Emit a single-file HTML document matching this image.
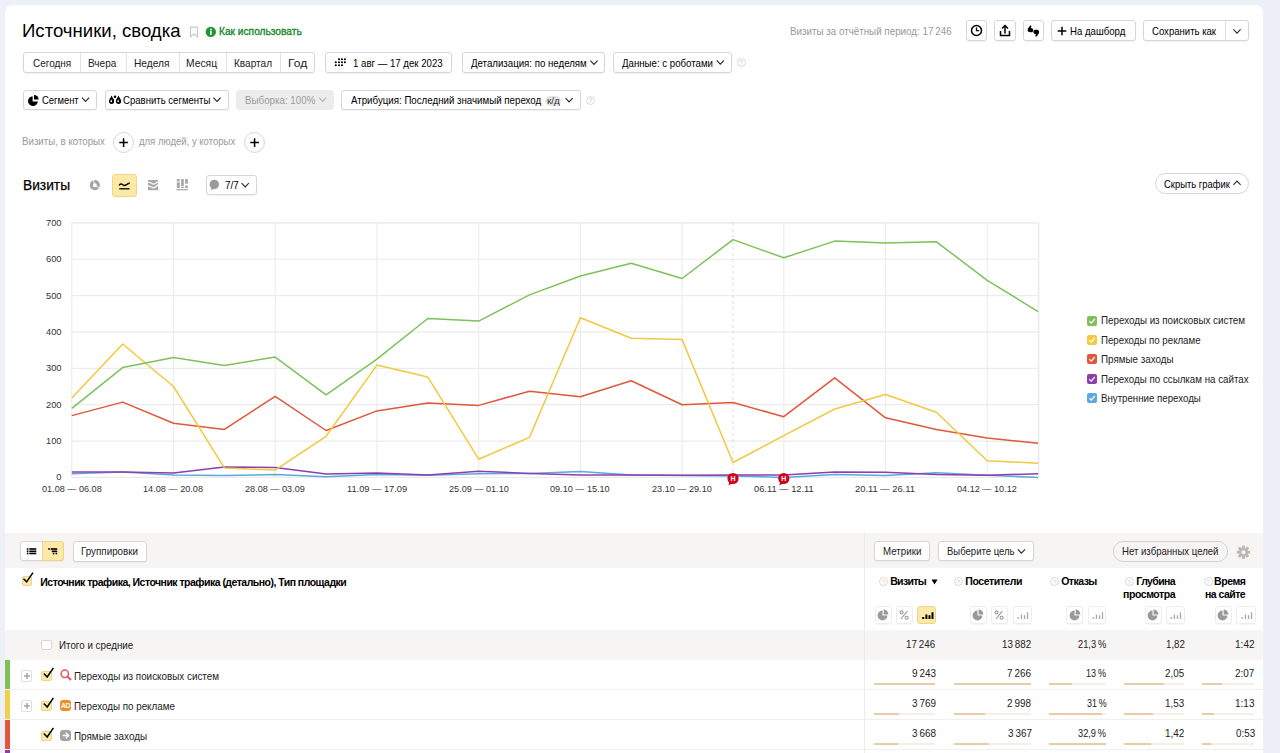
<!DOCTYPE html>
<html><head><meta charset="utf-8"><style>
*{box-sizing:border-box;margin:0;padding:0}
html,body{width:1280px;height:753px;overflow:hidden;background:#edf0f6;font-family:"Liberation Sans",sans-serif;color:#000}
#card{position:absolute;left:5px;top:5px;width:1258px;height:760px;background:#fff;border-radius:8px 8px 0 0}
.a{position:absolute;white-space:nowrap}
.b{position:absolute;border:1px solid #d6d6d6;border-radius:3px;background:#fff;box-shadow:0 1px 1px rgba(0,0,0,.05)}
.p{position:absolute;background:#fff}
</style></head><body>
<div id="card"></div>
<div class="a" style="left:22.31px;top:20.09px;font-size:18.5px;line-height:22px;color:#000;transform:scaleX(1.0037);transform-origin:0 0;">Источники, сводка</div>
<svg class="a" style="left:189px;top:26px" width="10" height="12" viewBox="0 0 10 12"><path d="M1.5 1.2h7v9.6l-3.5-2.8-3.5 2.8z" fill="none" stroke="#c9c9c9" stroke-width="1.2"/></svg>
<svg class="a" style="left:205px;top:26px" width="12" height="12" viewBox="0 0 12 12"><circle cx="5.8" cy="5.9" r="5.2" fill="#1f9636"/><rect x="5" y="5" width="1.7" height="3.8" fill="#fff"/><circle cx="5.85" cy="3.4" r="1" fill="#fff"/></svg>
<div class="a" style="left:219.19px;top:25.60px;font-size:10.3px;line-height:12px;color:#198a2c;transform:scaleX(0.9878);transform-origin:0 0;-webkit-text-stroke:0.35px #198a2c;">Как использовать</div>
<div class="a" style="left:789.72px;top:25.03px;font-size:10.5px;line-height:13px;color:#999;transform:scaleX(0.9338);transform-origin:0 0;">Визиты за отчётный период: 17 246</div>
<div class="b" style="left:966px;top:20px;width:21px;height:21px;"></div>
<svg class="a" style="left:966px;top:20px" width="21" height="21" viewBox="0 0 21 21"><circle cx="10.5" cy="10.5" r="5" fill="none" stroke="#000" stroke-width="1.5"/><path d="M10.5 7.5v3.2h2.6" fill="none" stroke="#000" stroke-width="1.3"/></svg>
<div class="b" style="left:994px;top:20px;width:22px;height:21px;"></div>
<svg class="a" style="left:994px;top:20px" width="22" height="21" viewBox="0 0 22 21"><path d="M11 5.5v8" stroke="#000" stroke-width="1.5"/><path d="M8 8.5l3-3 3 3" fill="none" stroke="#000" stroke-width="1.5"/><path d="M6.5 11v4.5h9V11" fill="none" stroke="#000" stroke-width="1.5"/></svg>
<div class="b" style="left:1023px;top:20px;width:21px;height:21px;"></div>
<svg class="a" style="left:1023px;top:20px" width="21" height="21" viewBox="0 0 21 21"><path d="M4.6 10.6 C4.4 8.8 5.6 7.2 7.6 5.3 L8.6 6.2 C8 7 7.7 7.6 7.8 8 C9.4 8.1 10.4 9.1 10.3 10.4 C10.2 11.7 9.1 12.3 7.6 12.3 C5.8 12.3 4.8 11.7 4.6 10.6Z" fill="#000"/><g transform="rotate(180 10.35 11.05)"><path d="M4.6 10.6 C4.4 8.8 5.6 7.2 7.6 5.3 L8.6 6.2 C8 7 7.7 7.6 7.8 8 C9.4 8.1 10.4 9.1 10.3 10.4 C10.2 11.7 9.1 12.3 7.6 12.3 C5.8 12.3 4.8 11.7 4.6 10.6Z" fill="#000"/></g></svg>
<div class="b" style="left:1051px;top:20px;width:85px;height:21px;"></div>
<svg class="a" style="left:1054.5px;top:24px" width="14" height="14" viewBox="0 0 14 14"><path d="M7 2.7v8.6M2.7 7h8.6" stroke="#000" stroke-width="1.5"/></svg>
<div class="a" style="left:1069.83px;top:25.03px;font-size:10.5px;line-height:13px;color:#000;transform:scaleX(0.9178);transform-origin:0 0;">На дашборд</div>
<div class="b" style="left:1143px;top:20px;width:106px;height:21px;"></div>
<div class="a" style="left:1225px;top:21px;width:1px;height:19px;background:#e0e0e0"></div>
<div class="a" style="left:1152.02px;top:25.03px;font-size:10.5px;line-height:13px;color:#000;transform:scaleX(0.9102);transform-origin:0 0;">Сохранить как</div>
<svg class="a" style="left:0;top:0;overflow:visible" width="1" height="1"><path d="M1233.40 29.45 L1237.00 33.15 L1240.60 29.45" fill="none" stroke="#000" stroke-width="1.1" stroke-opacity="0.85"/></svg>
<div class="b" style="left:23px;top:52px;width:292px;height:21px;"></div>
<div class="a" style="left:79.5px;top:53px;width:1px;height:19px;background:#e2e2e2"></div>
<div class="a" style="left:125.5px;top:53px;width:1px;height:19px;background:#e2e2e2"></div>
<div class="a" style="left:178.5px;top:53px;width:1px;height:19px;background:#e2e2e2"></div>
<div class="a" style="left:226px;top:53px;width:1px;height:19px;background:#e2e2e2"></div>
<div class="a" style="left:280px;top:53px;width:1px;height:19px;background:#e2e2e2"></div>
<div class="a" style="left:32.50px;top:56.53px;font-size:10.5px;line-height:13px;color:#222;transform:scaleX(0.9485);transform-origin:0 0;">Сегодня</div>
<div class="a" style="left:87.95px;top:56.53px;font-size:10.5px;line-height:13px;color:#222;transform:scaleX(0.9559);transform-origin:0 0;">Вчера</div>
<div class="a" style="left:134.19px;top:56.53px;font-size:10.5px;line-height:13px;color:#222;transform:scaleX(0.9695);transform-origin:0 0;">Неделя</div>
<div class="a" style="left:186.48px;top:56.53px;font-size:10.5px;line-height:13px;color:#222;transform:scaleX(0.9818);transform-origin:0 0;">Месяц</div>
<div class="a" style="left:233.95px;top:56.53px;font-size:10.5px;line-height:13px;color:#222;transform:scaleX(0.9576);transform-origin:0 0;">Квартал</div>
<div class="a" style="left:287.54px;top:56.53px;font-size:10.5px;line-height:13px;color:#222;transform:scaleX(1.1467);transform-origin:0 0;">Год</div>
<div class="b" style="left:325px;top:52px;width:127px;height:21px;"></div>
<svg class="a" style="left:326px;top:52px" width="30" height="22" viewBox="0 0 30 22"><circle cx="13" cy="7.2" r="1.05" fill="#000"/><circle cx="16" cy="7.2" r="1.05" fill="#000"/><circle cx="18.9" cy="7.2" r="1.05" fill="#000"/><circle cx="9.8" cy="10.2" r="1.05" fill="#000"/><circle cx="13" cy="10.2" r="1.05" fill="#000"/><circle cx="16" cy="10.2" r="1.05" fill="#000"/><circle cx="18.9" cy="10.2" r="1.05" fill="#000"/><circle cx="9.8" cy="13.3" r="1.05" fill="#000"/><circle cx="13" cy="13.3" r="1.05" fill="#000"/><circle cx="16" cy="13.3" r="1.05" fill="#000"/></svg>
<div class="a" style="left:353.28px;top:56.53px;font-size:10.5px;line-height:13px;color:#000;transform:scaleX(0.9166);transform-origin:0 0;">1 авг — 17 дек 2023</div>
<div class="b" style="left:462px;top:52px;width:143px;height:21px;"></div>
<div class="a" style="left:471.25px;top:56.53px;font-size:10.5px;line-height:13px;color:#000;transform:scaleX(0.9208);transform-origin:0 0;">Детализация: по неделям</div>
<svg class="a" style="left:0;top:0;overflow:visible" width="1" height="1"><path d="M590.40 60.65 L594.00 64.35 L597.60 60.65" fill="none" stroke="#000" stroke-width="1.1" stroke-opacity="0.85"/></svg>
<div class="b" style="left:613px;top:52px;width:119px;height:21px;"></div>
<div class="a" style="left:621.95px;top:56.53px;font-size:10.5px;line-height:13px;color:#000;transform:scaleX(0.9208);transform-origin:0 0;">Данные: с роботами</div>
<svg class="a" style="left:0;top:0;overflow:visible" width="1" height="1"><path d="M716.70 60.45 L720.30 64.15 L723.90 60.45" fill="none" stroke="#000" stroke-width="1.1" stroke-opacity="0.85"/></svg>
<div class="a" style="left:736.8px;top:58.4px;width:9px;height:9px;border:1px solid #d8d8d8;border-radius:50%;font-size:7px;line-height:8px;text-align:center;color:#c0c0c0">?</div>
<div class="b" style="left:23px;top:90px;width:74px;height:20px;"></div>
<svg class="a" style="left:26px;top:94px" width="14" height="14" viewBox="0 0 14 14"><path d="M6.6 2.2 A4.9 4.9 0 1 0 11.8 7.4 L6.6 7.4 Z" fill="#000"/><path d="M8 1 A4.6 4.6 0 0 1 12.6 5.6 L8 5.6 Z" fill="#000"/></svg>
<div class="a" style="left:41.53px;top:94.03px;font-size:10.5px;line-height:13px;color:#000;transform:scaleX(0.8952);transform-origin:0 0;">Сегмент</div>
<svg class="a" style="left:0;top:0;overflow:visible" width="1" height="1"><path d="M81.90 97.65 L85.50 101.35 L89.10 97.65" fill="none" stroke="#000" stroke-width="1.1" stroke-opacity="0.85"/></svg>
<div class="b" style="left:104.5px;top:90px;width:124.0px;height:20px;"></div>
<svg class="a" style="left:106px;top:93px" width="16" height="14" viewBox="0 0 16 14"><path d="M5.6 2.6 C4.6 5 2.9999999999999996 6.4 2.9999999999999996 8.3 A2.6 2.6 0 0 0 8.2 8.3 C8.2 6.4 6.6 5 5.6 2.6Z" fill="#000"/><path d="M5.3 6.2 C4.8 7.2 4.3999999999999995 7.8 4.3999999999999995 8.6 A1 1 0 0 0 6.199999999999999 8.8Z" fill="#fff"/><path d="M12.5 2.6 C11.5 5 9.9 6.4 9.9 8.3 A2.6 2.6 0 0 0 15.1 8.3 C15.1 6.4 13.5 5 12.5 2.6Z" fill="#000"/><path d="M12.2 6.2 C11.7 7.2 11.3 7.8 11.3 8.6 A1 1 0 0 0 13.1 8.8Z" fill="#fff"/><circle cx="9" cy="3.7" r="1.3" fill="#000"/></svg>
<div class="a" style="left:122.82px;top:94.03px;font-size:10.5px;line-height:13px;color:#000;transform:scaleX(0.9112);transform-origin:0 0;">Сравнить сегменты</div>
<svg class="a" style="left:0;top:0;overflow:visible" width="1" height="1"><path d="M213.40 97.65 L217.00 101.35 L220.60 97.65" fill="none" stroke="#000" stroke-width="1.1" stroke-opacity="0.85"/></svg>
<div class="b" style="left:236px;top:90px;width:98px;height:20px;background:#ececec;border-color:#ececec;box-shadow:none"></div>
<div class="a" style="left:244.62px;top:94.03px;font-size:10.5px;line-height:13px;color:#9c9c9c;transform:scaleX(0.9302);transform-origin:0 0;">Выборка: 100%</div>
<svg class="a" style="left:0;top:0;overflow:visible" width="1" height="1"><path d="M319.10 97.65 L322.70 101.35 L326.30 97.65" fill="none" stroke="#aaa" stroke-width="1.1" stroke-opacity="0.85"/></svg>
<div class="b" style="left:341px;top:90px;width:240px;height:20px;"></div>
<div class="a" style="left:351.00px;top:94.03px;font-size:10.5px;line-height:13px;color:#000;transform:scaleX(0.9249);transform-origin:0 0;">Атрибуция: Последний значимый переход</div>
<div class="a" style="left:544.7px;top:96px;width:16.5px;height:10px;border-radius:5px;background:#e4e4e4"></div>
<div class="a" style="left:546.56px;top:95.73px;font-size:9px;line-height:11px;color:#333;transform:scaleX(1.0974);transform-origin:0 0;">к/д</div>
<svg class="a" style="left:0;top:0;overflow:visible" width="1" height="1"><path d="M565.50 98.15 L569.10 101.85 L572.70 98.15" fill="none" stroke="#000" stroke-width="1.1" stroke-opacity="0.85"/></svg>
<div class="a" style="left:585.7px;top:96.3px;width:9px;height:9px;border:1px solid #d8d8d8;border-radius:50%;font-size:7px;line-height:8px;text-align:center;color:#c0c0c0">?</div>
<div class="a" style="left:22.22px;top:135.33px;font-size:10.5px;line-height:13px;color:#999;transform:scaleX(0.9237);transform-origin:0 0;">Визиты, в которых</div>
<div class="a" style="left:113px;top:132px;width:21px;height:21px;border:1px solid #d6d6d6;border-radius:50%;background:#fff"></div>
<svg class="a" style="left:117px;top:136px" width="13" height="13" viewBox="0 0 13 13"><path d="M6.6 2.3v8.6M2.3 6.6h8.6" stroke="#000" stroke-width="1.5"/></svg>
<div class="a" style="left:139.40px;top:135.33px;font-size:10.5px;line-height:13px;color:#999;transform:scaleX(0.9079);transform-origin:0 0;">для людей, у которых</div>
<div class="a" style="left:243.5px;top:132px;width:21px;height:21px;border:1px solid #d6d6d6;border-radius:50%;background:#fff"></div>
<svg class="a" style="left:247.5px;top:136px" width="13" height="13" viewBox="0 0 13 13"><path d="M6.6 2.3v8.6M2.3 6.6h8.6" stroke="#000" stroke-width="1.5"/></svg>
<div class="a" style="left:23.10px;top:176.57px;font-size:14.3px;line-height:17px;color:#000;transform:scaleX(0.9623);transform-origin:0 0;-webkit-text-stroke:0.25px #000;">Визиты</div>
<svg class="a" style="left:87px;top:177px" width="16" height="16" viewBox="0 0 16 16"><circle cx="7.85" cy="8.2" r="3.55" fill="none" stroke="#a3a3a3" stroke-width="3.1"/><path d="M7.85 8.2 L6.2 2.8 M7.85 8.2 L13 11.1" stroke="#fff" stroke-width="0.9"/></svg>
<div class="b" style="left:111.5px;top:173.5px;width:25.0px;height:23.0px;background:#fce9a5;border-color:#f0d68a;box-shadow:none"></div>
<svg class="a" style="left:111.5px;top:173.5px" width="25" height="23" viewBox="0 0 25 23"><path d="M7.4 10.9 C8.6 9.5 10 9.9 11.2 11.1 C12.2 12 13 11.7 14.5 10.7 L17.2 9.1" fill="none" stroke="#000" stroke-width="1.4" stroke-linecap="round"/><path d="M7.3 14.8h10.2" stroke="#000" stroke-width="1.3"/></svg>
<svg class="a" style="left:147px;top:179px" width="13" height="13" viewBox="0 0 13 13"><rect x="1.05" y="0.95" width="10.05" height="10.25" fill="#a8a8a8"/><path d="M0.5 3.2 Q3.6 3.4 6.5 5.3 Q8.8 4.6 11.6 1.8 M0.5 6.9 Q3.6 7.1 6.5 9 Q8.8 8.3 11.6 5.5" fill="none" stroke="#fff" stroke-width="1.2"/></svg>
<svg class="a" style="left:175px;top:178px" width="14" height="14" viewBox="0 0 14 14"><g fill="#a8a8a8"><rect x="1.8" y="1" width="3" height="2.4"/><rect x="1.8" y="4.3" width="3" height="5.7"/><rect x="6.1" y="1" width="2.7" height="7.4"/><rect x="6.1" y="9" width="2.7" height="1"/><rect x="10.1" y="1" width="2.8" height="4.7"/><rect x="10.1" y="7.5" width="2.8" height="2.5"/><rect x="1.3" y="11.1" width="11.7" height="1.2"/></g></svg>
<div class="b" style="left:206px;top:175px;width:51px;height:20px;"></div>
<svg class="a" style="left:207px;top:178px" width="14" height="14" viewBox="0 0 14 14"><circle cx="7.3" cy="6.4" r="4.7" fill="#9a9a9a"/><path d="M4.6 9.5 L4 12.6 L7.6 10.6z" fill="#9a9a9a"/></svg>
<div class="a" style="left:224.81px;top:179.03px;font-size:10.5px;line-height:13px;color:#000;transform:scaleX(0.9376);transform-origin:0 0;">7/7</div>
<svg class="a" style="left:0;top:0;overflow:visible" width="1" height="1"><path d="M241.60 183.15 L245.20 186.85 L248.80 183.15" fill="none" stroke="#000" stroke-width="1.1" stroke-opacity="0.85"/></svg>
<div class="a" style="left:1154.5px;top:173px;width:94px;height:21px;border:1px solid #d6d6d6;border-radius:11px;background:#fff"></div>
<div class="a" style="left:1163.93px;top:177.53px;font-size:10.5px;line-height:13px;color:#000;transform:scaleX(0.8989);transform-origin:0 0;">Скрыть график</div>
<svg class="a" style="left:0;top:0;overflow:visible" width="1" height="1"><path d="M1233.40 184.85 L1237.00 181.15 L1240.60 184.85" fill="none" stroke="#000" stroke-width="1.1" stroke-opacity="0.85"/></svg>
<svg class="a" style="left:0;top:0" width="1280" height="753"><path d="M71.8 477.40H1038.1" stroke="#ebebeb" stroke-width="1.2"/><path d="M71.8 441.04H1038.1" stroke="#ebebeb" stroke-width="1.2"/><path d="M71.8 404.69H1038.1" stroke="#ebebeb" stroke-width="1.2"/><path d="M71.8 368.33H1038.1" stroke="#ebebeb" stroke-width="1.2"/><path d="M71.8 331.97H1038.1" stroke="#ebebeb" stroke-width="1.2"/><path d="M71.8 295.62H1038.1" stroke="#ebebeb" stroke-width="1.2"/><path d="M71.8 259.26H1038.1" stroke="#ebebeb" stroke-width="1.2"/><path d="M71.8 222.90H1038.1" stroke="#ebebeb" stroke-width="1.2"/><path d="M71.8 222.60H1038.1" stroke="#ebebeb" stroke-width="1.2"/><path d="M71.80 222.90V477.40" stroke="#ededed" stroke-width="1.2"/><path d="M173.52 222.90V477.40" stroke="#ededed" stroke-width="1.2"/><path d="M275.23 222.90V477.40" stroke="#ededed" stroke-width="1.2"/><path d="M376.95 222.90V477.40" stroke="#ededed" stroke-width="1.2"/><path d="M478.66 222.90V477.40" stroke="#ededed" stroke-width="1.2"/><path d="M580.38 222.90V477.40" stroke="#ededed" stroke-width="1.2"/><path d="M682.09 222.90V477.40" stroke="#ededed" stroke-width="1.2"/><path d="M783.81 222.90V477.40" stroke="#ededed" stroke-width="1.2"/><path d="M885.53 222.90V477.40" stroke="#ededed" stroke-width="1.2"/><path d="M987.24 222.90V477.40" stroke="#ededed" stroke-width="1.2"/><path d="M1038.60 222.90V477.40" stroke="#ebebeb" stroke-width="1.6"/><path d="M732.9526315789473 222.90099999999998V477.4" stroke="#dcdcdc" stroke-width="1" stroke-dasharray="3 3"/><path d="M71.8 473.8 L122.7 471.9 L173.5 474.9 L224.4 475.6 L275.2 474.5 L326.1 476.7 L376.9 474.5 L427.8 475.2 L478.7 473.8 L529.5 473.4 L580.4 471.6 L631.2 474.9 L682.1 475.6 L733.0 475.9 L783.8 477.4 L834.7 474.5 L885.5 475.6 L936.4 472.7 L987.2 475.2 L1038.1 477.4" fill="none" stroke="#5ca8e0" stroke-width="1.5" stroke-linejoin="round"/><path d="M71.8 471.9 L122.7 471.9 L173.5 473.0 L224.4 466.9 L275.2 467.6 L326.1 474.1 L376.9 473.0 L427.8 474.9 L478.7 471.2 L529.5 473.4 L580.4 474.9 L631.2 474.9 L682.1 475.2 L733.0 474.9 L783.8 474.9 L834.7 471.9 L885.5 472.3 L936.4 474.5 L987.2 475.2 L1038.1 473.8" fill="none" stroke="#8e3fae" stroke-width="1.5" stroke-linejoin="round"/><path d="M71.8 415.6 L122.7 402.1 L173.5 423.2 L224.4 429.4 L275.2 396.3 L326.1 430.5 L376.9 410.9 L427.8 402.9 L478.7 405.4 L529.5 391.2 L580.4 396.7 L631.2 380.7 L682.1 404.7 L733.0 402.5 L783.8 416.7 L834.7 377.8 L885.5 417.8 L936.4 429.4 L987.2 438.1 L1038.1 443.2" fill="none" stroke="#e0573a" stroke-width="1.5" stroke-linejoin="round"/><path d="M71.8 398.1 L122.7 344.0 L173.5 386.5 L224.4 467.9 L275.2 470.1 L326.1 436.3 L376.9 365.1 L427.8 377.1 L478.7 459.2 L529.5 437.4 L580.4 317.8 L631.2 338.2 L682.1 339.6 L733.0 462.5 L783.8 435.6 L834.7 409.0 L885.5 394.5 L936.4 412.3 L987.2 460.7 L1038.1 463.2" fill="none" stroke="#f2c840" stroke-width="1.5" stroke-linejoin="round"/><path d="M71.8 408.3 L122.7 367.6 L173.5 357.4 L224.4 365.4 L275.2 357.1 L326.1 394.9 L376.9 359.2 L427.8 318.5 L478.7 321.1 L529.5 294.9 L580.4 276.0 L631.2 263.3 L682.1 278.5 L733.0 239.6 L783.8 257.8 L834.7 241.1 L885.5 242.9 L936.4 241.8 L987.2 280.3 L1038.1 311.6" fill="none" stroke="#7ec15a" stroke-width="1.5" stroke-linejoin="round"/><path d="M729.5 481.5 L728.5 485.5 L733.0 483.0Z" fill="#d0021b"/><circle cx="733.0" cy="478.5" r="5.6" fill="#d0021b"/><text x="733.0" y="481.1" font-family="Liberation Sans" font-size="7" font-weight="700" fill="#fff" text-anchor="middle">Н</text><path d="M780.3 481.5 L779.3 485.5 L783.8 483.0Z" fill="#d0021b"/><circle cx="783.8" cy="478.5" r="5.6" fill="#d0021b"/><text x="783.8" y="481.1" font-family="Liberation Sans" font-size="7" font-weight="700" fill="#fff" text-anchor="middle">Н</text></svg>
<div class="a" style="left:56.36px;top:472.33px;font-size:9.3px;line-height:11px;color:#333;">0</div>
<div class="a" style="left:46.04px;top:435.97px;font-size:9.3px;line-height:11px;color:#333;">100</div>
<div class="a" style="left:46.04px;top:399.61px;font-size:9.3px;line-height:11px;color:#333;">200</div>
<div class="a" style="left:46.04px;top:363.26px;font-size:9.3px;line-height:11px;color:#333;">300</div>
<div class="a" style="left:46.04px;top:326.90px;font-size:9.3px;line-height:11px;color:#333;">400</div>
<div class="a" style="left:46.04px;top:290.54px;font-size:9.3px;line-height:11px;color:#333;">500</div>
<div class="a" style="left:46.04px;top:254.18px;font-size:9.3px;line-height:11px;color:#333;">600</div>
<div class="a" style="left:46.04px;top:217.83px;font-size:9.3px;line-height:11px;color:#333;">700</div>
<div class="a" style="left:41.84px;top:483.93px;font-size:9.3px;line-height:11px;color:#333;transform:scaleX(0.9790);transform-origin:0 0;">01.08 — 06.08</div>
<div class="a" style="left:143.23px;top:483.93px;font-size:9.3px;line-height:11px;color:#333;transform:scaleX(0.9843);transform-origin:0 0;">14.08 — 20.08</div>
<div class="a" style="left:245.18px;top:483.93px;font-size:9.3px;line-height:11px;color:#333;transform:scaleX(0.9813);transform-origin:0 0;">28.08 — 03.09</div>
<div class="a" style="left:346.65px;top:483.93px;font-size:9.3px;line-height:11px;color:#333;transform:scaleX(0.9967);transform-origin:0 0;">11.09 — 17.09</div>
<div class="a" style="left:448.61px;top:483.93px;font-size:9.3px;line-height:11px;color:#333;transform:scaleX(0.9798);transform-origin:0 0;">25.09 — 01.10</div>
<div class="a" style="left:550.42px;top:483.93px;font-size:9.3px;line-height:11px;color:#333;transform:scaleX(0.9783);transform-origin:0 0;">09.10 — 15.10</div>
<div class="a" style="left:652.04px;top:483.93px;font-size:9.3px;line-height:11px;color:#333;transform:scaleX(0.9798);transform-origin:0 0;">23.10 — 29.10</div>
<div class="a" style="left:753.84px;top:483.93px;font-size:9.3px;line-height:11px;color:#333;transform:scaleX(1.0030);transform-origin:0 0;">06.11 — 12.11</div>
<div class="a" style="left:855.46px;top:483.93px;font-size:9.3px;line-height:11px;color:#333;transform:scaleX(1.0046);transform-origin:0 0;">20.11 — 26.11</div>
<div class="a" style="left:957.28px;top:483.93px;font-size:9.3px;line-height:11px;color:#333;transform:scaleX(0.9805);transform-origin:0 0;">04.12 — 10.12</div>
<div class="a" style="left:1087px;top:315.5px;width:10px;height:10px;border-radius:2px;background:#7ec15a"></div>
<svg class="a" style="left:1087px;top:316px" width="10" height="10" viewBox="0 0 10 10"><path d="M2.3 5.2 L4.2 7.2 L7.8 3" fill="none" stroke="#fff" stroke-width="1.2"/></svg>
<div class="a" style="left:1101.02px;top:314.33px;font-size:10.5px;line-height:13px;color:#222;transform:scaleX(0.9324);transform-origin:0 0;">Переходы из поисковых систем</div>
<div class="a" style="left:1087px;top:334.9px;width:10px;height:10px;border-radius:2px;background:#f5c842"></div>
<svg class="a" style="left:1087px;top:335px" width="10" height="10" viewBox="0 0 10 10"><path d="M2.3 5.2 L4.2 7.2 L7.8 3" fill="none" stroke="#fff" stroke-width="1.2"/></svg>
<div class="a" style="left:1101.03px;top:333.73px;font-size:10.5px;line-height:13px;color:#222;transform:scaleX(0.9214);transform-origin:0 0;">Переходы по рекламе</div>
<div class="a" style="left:1087px;top:354.3px;width:10px;height:10px;border-radius:2px;background:#e0573a"></div>
<svg class="a" style="left:1087px;top:354px" width="10" height="10" viewBox="0 0 10 10"><path d="M2.3 5.2 L4.2 7.2 L7.8 3" fill="none" stroke="#fff" stroke-width="1.2"/></svg>
<div class="a" style="left:1101.01px;top:353.13px;font-size:10.5px;line-height:13px;color:#222;transform:scaleX(0.9359);transform-origin:0 0;">Прямые заходы</div>
<div class="a" style="left:1087px;top:373.7px;width:10px;height:10px;border-radius:2px;background:#8e3fae"></div>
<svg class="a" style="left:1087px;top:374px" width="10" height="10" viewBox="0 0 10 10"><path d="M2.3 5.2 L4.2 7.2 L7.8 3" fill="none" stroke="#fff" stroke-width="1.2"/></svg>
<div class="a" style="left:1101.02px;top:372.53px;font-size:10.5px;line-height:13px;color:#222;transform:scaleX(0.9290);transform-origin:0 0;">Переходы по ссылкам на сайтах</div>
<div class="a" style="left:1087px;top:393.1px;width:10px;height:10px;border-radius:2px;background:#5ca8e0"></div>
<svg class="a" style="left:1087px;top:393px" width="10" height="10" viewBox="0 0 10 10"><path d="M2.3 5.2 L4.2 7.2 L7.8 3" fill="none" stroke="#fff" stroke-width="1.2"/></svg>
<div class="a" style="left:1101.03px;top:391.93px;font-size:10.5px;line-height:13px;color:#222;transform:scaleX(0.9224);transform-origin:0 0;">Внутренние переходы</div>
<div class="a" style="left:5px;top:533px;width:1258px;height:35px;background:#f6f5f3"></div>
<div class="a" style="left:864px;top:533px;width:1px;height:230px;background:#ebebeb"></div>
<div class="b" style="left:20px;top:541px;width:44px;height:20px;"></div>
<div class="a" style="left:42px;top:541px;width:22px;height:20px;background:#fce9a5;border:1px solid #ead58f;border-radius:0 3px 3px 0"></div>
<svg class="a" style="left:20px;top:541px" width="44" height="20" viewBox="0 0 44 20"><g fill="#000"><rect x="6.8" y="7.2" width="1.6" height="1.6"/><rect x="6.8" y="9.5" width="1.6" height="1.6"/><rect x="6.8" y="11.7" width="1.6" height="1.6"/><rect x="9.3" y="7.2" width="7" height="1.6"/><rect x="9.3" y="9.5" width="7" height="1.6"/><rect x="9.3" y="11.7" width="7" height="1.6"/><rect x="28.2" y="7.2" width="1.6" height="1.6"/><rect x="30.6" y="7.2" width="6.6" height="1.6"/><rect x="31.8" y="9.5" width="5.4" height="1.6"/><rect x="32.8" y="11.7" width="1.6" height="1.6"/><rect x="35.6" y="11.7" width="1.6" height="1.6"/></g></svg>
<div class="b" style="left:72.5px;top:541px;width:74.0px;height:20.5px;"></div>
<div class="a" style="left:80.81px;top:545.03px;font-size:10.5px;line-height:13px;color:#222;transform:scaleX(0.9347);transform-origin:0 0;">Группировки</div>
<div class="b" style="left:873.5px;top:541px;width:56.5px;height:20px;"></div>
<div class="a" style="left:882.52px;top:545.33px;font-size:10.5px;line-height:13px;color:#222;transform:scaleX(0.9273);transform-origin:0 0;">Метрики</div>
<div class="b" style="left:938px;top:541px;width:95.5px;height:20px;"></div>
<div class="a" style="left:946.94px;top:545.33px;font-size:10.5px;line-height:13px;color:#222;transform:scaleX(0.9079);transform-origin:0 0;">Выберите цель</div>
<svg class="a" style="left:0;top:0;overflow:visible" width="1" height="1"><path d="M1017.80 549.45 L1021.40 553.15 L1025.00 549.45" fill="none" stroke="#000" stroke-width="1.1" stroke-opacity="0.85"/></svg>
<div class="a" style="left:1112.5px;top:541.4px;width:115px;height:20.3px;border:1px solid #d2d2d2;border-radius:10px;background:transparent"></div>
<div class="a" style="left:1121.83px;top:545.13px;font-size:10.5px;line-height:13px;color:#222;transform:scaleX(0.9134);transform-origin:0 0;">Нет избранных целей</div>
<svg class="a" style="left:1236px;top:544.5px" width="15" height="15" viewBox="0 0 15 15"><g transform="translate(7.5 7.2)"><circle r="4.6" fill="#b8b8b8"/><rect x="-1.4" y="-6.6" width="2.8" height="3" fill="#b8b8b8" transform="rotate(0)"/><rect x="-1.4" y="-6.6" width="2.8" height="3" fill="#b8b8b8" transform="rotate(45)"/><rect x="-1.4" y="-6.6" width="2.8" height="3" fill="#b8b8b8" transform="rotate(90)"/><rect x="-1.4" y="-6.6" width="2.8" height="3" fill="#b8b8b8" transform="rotate(135)"/><rect x="-1.4" y="-6.6" width="2.8" height="3" fill="#b8b8b8" transform="rotate(180)"/><rect x="-1.4" y="-6.6" width="2.8" height="3" fill="#b8b8b8" transform="rotate(225)"/><rect x="-1.4" y="-6.6" width="2.8" height="3" fill="#b8b8b8" transform="rotate(270)"/><rect x="-1.4" y="-6.6" width="2.8" height="3" fill="#b8b8b8" transform="rotate(315)"/><circle r="2" fill="#f6f5f3"/></g></svg>
<div class="a" style="left:21.5px;top:575.5px;width:10px;height:10px;background:#fbe9a9;border:1px solid #e8d592;border-radius:2px"></div>
<svg class="a" style="left:18px;top:566px" width="20" height="20" viewBox="0 0 20 20"><path d="M5.5 12.8 L8.6 15.9 L15 6.6" fill="none" stroke="#000" stroke-width="1.5"/></svg>
<div class="a" style="left:40.32px;top:575.63px;font-size:10.5px;line-height:13px;color:#000;letter-spacing:-0.519px;font-weight:700;">Источник трафика, Источник трафика (детально), Тип площадки</div>
<div class="a" style="left:879.2px;top:577.4px;width:9px;height:9px;border:1px solid #d9d9d9;border-radius:50%"></div>
<div class="a" style="left:882.02px;top:578.72px;font-size:6px;line-height:7px;color:#cfcfcf;">?</div>
<div class="a" style="left:890.22px;top:575.03px;font-size:10.5px;line-height:13px;color:#000;letter-spacing:-0.686px;font-weight:700;">Визиты</div>
<svg class="a" style="left:931px;top:578px" width="8" height="8" viewBox="0 0 8 8"><path d="M0.5 1.5h6l-3 5z" fill="#000"/></svg>
<div class="b" style="left:874.5px;top:606px;width:17.0px;height:17.5px;border-color:#ededed;box-shadow:0 1px 1px rgba(0,0,0,.04)"></div>
<svg class="a" style="left:876px;top:608px" width="14" height="14" viewBox="0 0 14 14"><path d="M6.5 7.5 V2.6 A4.9 4.9 0 1 0 11.4 7.5 Z" fill="#9a9a9a"/><path d="M7.6 6.4 V1.6 A4.8 4.8 0 0 1 12.4 6.4 Z" fill="#9a9a9a"/></svg>
<div class="b" style="left:895.5px;top:606px;width:17.0px;height:17.5px;border-color:#ededed;box-shadow:0 1px 1px rgba(0,0,0,.04)"></div>
<svg class="a" style="left:897px;top:608px" width="14" height="14" viewBox="0 0 14 14"><circle cx="4.6" cy="4.4" r="1.5" fill="none" stroke="#999" stroke-width="1.1"/><circle cx="9.6" cy="9.8" r="1.5" fill="none" stroke="#999" stroke-width="1.1"/><path d="M10.4 3.2 L3.8 11" stroke="#999" stroke-width="1.1"/></svg>
<div class="b" style="left:917px;top:606px;width:19px;height:17.5px;background:#fce9a5;border-color:#ead58f;box-shadow:none"></div>
<svg class="a" style="left:920px;top:608px" width="14" height="14" viewBox="0 0 14 14"><path d="M3.2 11V9.1 M6.4 11V6.4 M9.5 11V7.2 M12.5 11V4.2" stroke="#000" stroke-width="2"/></svg>
<div class="a" style="left:953.9px;top:577.4px;width:9px;height:9px;border:1px solid #d9d9d9;border-radius:50%"></div>
<div class="a" style="left:956.72px;top:578.72px;font-size:6px;line-height:7px;color:#cfcfcf;">?</div>
<div class="a" style="left:965.32px;top:575.03px;font-size:10.5px;line-height:13px;color:#000;letter-spacing:-0.438px;font-weight:700;">Посетители</div>
<div class="b" style="left:969.5px;top:606px;width:17.0px;height:17.5px;border-color:#ededed;box-shadow:0 1px 1px rgba(0,0,0,.04)"></div>
<svg class="a" style="left:971px;top:608px" width="14" height="14" viewBox="0 0 14 14"><path d="M6.5 7.5 V2.6 A4.9 4.9 0 1 0 11.4 7.5 Z" fill="#9a9a9a"/><path d="M7.6 6.4 V1.6 A4.8 4.8 0 0 1 12.4 6.4 Z" fill="#9a9a9a"/></svg>
<div class="b" style="left:991px;top:606px;width:17px;height:17.5px;border-color:#ededed;box-shadow:0 1px 1px rgba(0,0,0,.04)"></div>
<svg class="a" style="left:992px;top:608px" width="14" height="14" viewBox="0 0 14 14"><circle cx="4.6" cy="4.4" r="1.5" fill="none" stroke="#999" stroke-width="1.1"/><circle cx="9.6" cy="9.8" r="1.5" fill="none" stroke="#999" stroke-width="1.1"/><path d="M10.4 3.2 L3.8 11" stroke="#999" stroke-width="1.1"/></svg>
<div class="b" style="left:1012.5px;top:606px;width:19.0px;height:17.5px;border-color:#ededed;box-shadow:0 1px 1px rgba(0,0,0,.04)"></div>
<svg class="a" style="left:1015px;top:608px" width="14" height="14" viewBox="0 0 14 14"><path d="M3.2 11V9.1 M6.4 11V6.4 M9.5 11V7.2 M12.5 11V4.2" stroke="#a8a8a8" stroke-width="1.3"/></svg>
<div class="a" style="left:1050.2px;top:577.4px;width:9px;height:9px;border:1px solid #d9d9d9;border-radius:50%"></div>
<div class="a" style="left:1053.02px;top:578.72px;font-size:6px;line-height:7px;color:#cfcfcf;">?</div>
<div class="a" style="left:1061.18px;top:575.03px;font-size:10.5px;line-height:13px;color:#000;letter-spacing:-0.518px;font-weight:700;">Отказы</div>
<div class="b" style="left:1066px;top:606px;width:17px;height:17.5px;border-color:#ededed;box-shadow:0 1px 1px rgba(0,0,0,.04)"></div>
<svg class="a" style="left:1068px;top:608px" width="14" height="14" viewBox="0 0 14 14"><path d="M6.5 7.5 V2.6 A4.9 4.9 0 1 0 11.4 7.5 Z" fill="#9a9a9a"/><path d="M7.6 6.4 V1.6 A4.8 4.8 0 0 1 12.4 6.4 Z" fill="#9a9a9a"/></svg>
<div class="b" style="left:1087.5px;top:606px;width:18.5px;height:17.5px;border-color:#ededed;box-shadow:0 1px 1px rgba(0,0,0,.04)"></div>
<svg class="a" style="left:1090px;top:608px" width="14" height="14" viewBox="0 0 14 14"><path d="M3.2 11V9.1 M6.4 11V6.4 M9.5 11V7.2 M12.5 11V4.2" stroke="#a8a8a8" stroke-width="1.3"/></svg>
<div class="a" style="left:1124.8px;top:577.4px;width:9px;height:9px;border:1px solid #d9d9d9;border-radius:50%"></div>
<div class="a" style="left:1127.62px;top:578.72px;font-size:6px;line-height:7px;color:#cfcfcf;">?</div>
<div class="a" style="left:1136.32px;top:575.03px;font-size:10.5px;line-height:13px;color:#000;letter-spacing:-0.602px;font-weight:700;">Глубина</div>
<div class="a" style="left:1122.97px;top:588.33px;font-size:10.5px;line-height:13px;color:#000;letter-spacing:-0.423px;font-weight:700;">просмотра</div>
<div class="b" style="left:1144.5px;top:606px;width:17.0px;height:17.5px;border-color:#ededed;box-shadow:0 1px 1px rgba(0,0,0,.04)"></div>
<svg class="a" style="left:1146px;top:608px" width="14" height="14" viewBox="0 0 14 14"><path d="M6.5 7.5 V2.6 A4.9 4.9 0 1 0 11.4 7.5 Z" fill="#9a9a9a"/><path d="M7.6 6.4 V1.6 A4.8 4.8 0 0 1 12.4 6.4 Z" fill="#9a9a9a"/></svg>
<div class="b" style="left:1166px;top:606px;width:19px;height:17.5px;border-color:#ededed;box-shadow:0 1px 1px rgba(0,0,0,.04)"></div>
<svg class="a" style="left:1168px;top:608px" width="14" height="14" viewBox="0 0 14 14"><path d="M3.2 11V9.1 M6.4 11V6.4 M9.5 11V7.2 M12.5 11V4.2" stroke="#a8a8a8" stroke-width="1.3"/></svg>
<div class="a" style="left:1203.5px;top:577.4px;width:9px;height:9px;border:1px solid #d9d9d9;border-radius:50%"></div>
<div class="a" style="left:1206.32px;top:578.72px;font-size:6px;line-height:7px;color:#cfcfcf;">?</div>
<div class="a" style="left:1214.02px;top:575.03px;font-size:10.5px;line-height:13px;color:#000;letter-spacing:-0.421px;font-weight:700;">Время</div>
<div class="a" style="left:1204.97px;top:588.33px;font-size:10.5px;line-height:13px;color:#000;letter-spacing:-0.530px;font-weight:700;">на сайте</div>
<div class="b" style="left:1214.5px;top:606px;width:17.0px;height:17.5px;border-color:#ededed;box-shadow:0 1px 1px rgba(0,0,0,.04)"></div>
<svg class="a" style="left:1216px;top:608px" width="14" height="14" viewBox="0 0 14 14"><path d="M6.5 7.5 V2.6 A4.9 4.9 0 1 0 11.4 7.5 Z" fill="#9a9a9a"/><path d="M7.6 6.4 V1.6 A4.8 4.8 0 0 1 12.4 6.4 Z" fill="#9a9a9a"/></svg>
<div class="b" style="left:1236px;top:606px;width:19.5px;height:17.5px;border-color:#ededed;box-shadow:0 1px 1px rgba(0,0,0,.04)"></div>
<svg class="a" style="left:1239px;top:608px" width="14" height="14" viewBox="0 0 14 14"><path d="M3.2 11V9.1 M6.4 11V6.4 M9.5 11V7.2 M12.5 11V4.2" stroke="#a8a8a8" stroke-width="1.3"/></svg>
<div class="a" style="left:5px;top:630px;width:1258px;height:30px;background:#f6f5f3"></div>
<div class="a" style="left:864px;top:630px;width:1px;height:30px;background:#ebebeb"></div>
<div class="a" style="left:41px;top:640px;width:11px;height:10px;background:#fff;border:1px solid #d6d6d6;border-radius:2px"></div>
<div class="a" style="left:58.82px;top:639.23px;font-size:10.5px;line-height:13px;color:#222;transform:scaleX(0.9332);transform-origin:0 0;">Итого и средние</div>
<div class="a" style="left:906.47px;top:638.36px;font-size:11px;line-height:13px;color:#222;transform:scaleX(0.8885);transform-origin:0 0;">17 246</div>
<div class="a" style="left:1002.26px;top:638.36px;font-size:11px;line-height:13px;color:#222;transform:scaleX(0.8916);transform-origin:0 0;">13 882</div>
<div class="a" style="left:1078.14px;top:638.36px;font-size:11px;line-height:13px;color:#222;transform:scaleX(0.8444);transform-origin:0 0;">21,3 %</div>
<div class="a" style="left:1165.57px;top:638.36px;font-size:11px;line-height:13px;color:#222;transform:scaleX(0.8841);transform-origin:0 0;">1,82</div>
<div class="a" style="left:1235.15px;top:638.36px;font-size:11px;line-height:13px;color:#222;transform:scaleX(0.9141);transform-origin:0 0;">1:42</div>
<div class="a" style="left:5px;top:660px;width:5px;height:29px;background:#7ec15a"></div>
<div class="a" style="left:10px;top:689px;width:1253px;height:1px;background:#efefef"></div>
<div class="a" style="left:20.5px;top:670px;width:11.5px;height:11.5px;border:1px solid #dedede;border-radius:2px;background:#fff"></div>
<svg class="a" style="left:20.5px;top:670px" width="12" height="12" viewBox="0 0 12 12"><path d="M6 3v6M3 6h6" stroke="#a8a8a8" stroke-width="1.5"/></svg>
<div class="a" style="left:41.2px;top:670.5px;width:10.8px;height:10px;background:#fbe9a9;border:1px solid #e8d592;border-radius:2px"></div>
<svg class="a" style="left:38px;top:663px" width="20" height="20" viewBox="0 0 20 20"><path d="M5.8 10.5 L9.2 14 L15.4 4.8" fill="none" stroke="#000" stroke-width="1.5"/></svg>
<svg class="a" style="left:59px;top:668px" width="14" height="14" viewBox="0 0 14 14"><circle cx="5.8" cy="5.8" r="3.7" fill="none" stroke="#e5535b" stroke-width="1.5"/><path d="M8.6 8.6 L12 12" stroke="#e5535b" stroke-width="2"/></svg>
<div class="a" style="left:73.61px;top:669.53px;font-size:10.5px;line-height:13px;color:#222;transform:scaleX(0.9396);transform-origin:0 0;">Переходы из поисковых систем</div>
<div class="a" style="left:911.55px;top:667.36px;font-size:11px;line-height:13px;color:#222;transform:scaleX(0.9013);transform-origin:0 0;">9 243</div>
<div class="a" style="left:873.6px;top:682.6px;width:61.6px;height:2px;background:#f7eee6"></div>
<div class="a" style="left:873.6px;top:682.6px;width:61.6px;height:2px;background:#e9cca6"></div>
<div class="a" style="left:1007.41px;top:667.36px;font-size:11px;line-height:13px;color:#222;transform:scaleX(0.8994);transform-origin:0 0;">7 266</div>
<div class="a" style="left:953.5px;top:682.6px;width:77.5px;height:2px;background:#f7eee6"></div>
<div class="a" style="left:953.5px;top:682.6px;width:77.5px;height:2px;background:#e9cca6"></div>
<div class="a" style="left:1086.32px;top:667.36px;font-size:11px;line-height:13px;color:#222;transform:scaleX(0.8245);transform-origin:0 0;">13 %</div>
<div class="a" style="left:1049.3px;top:682.6px;width:56.7px;height:2px;background:#f7eee6"></div>
<div class="a" style="left:1049.3px;top:682.6px;width:22.7px;height:2px;background:#e9cca6"></div>
<div class="a" style="left:1165.31px;top:667.36px;font-size:11px;line-height:13px;color:#222;transform:scaleX(0.8919);transform-origin:0 0;">2,05</div>
<div class="a" style="left:1124px;top:682.6px;width:60.0px;height:2px;background:#f7eee6"></div>
<div class="a" style="left:1124px;top:682.6px;width:39.6px;height:2px;background:#e9cca6"></div>
<div class="a" style="left:1235.40px;top:667.36px;font-size:11px;line-height:13px;color:#222;transform:scaleX(0.9017);transform-origin:0 0;">2:07</div>
<div class="a" style="left:1202.3px;top:682.6px;width:51.9px;height:2px;background:#f7eee6"></div>
<div class="a" style="left:1202.3px;top:682.6px;width:20.2px;height:2px;background:#e9cca6"></div>
<div class="a" style="left:5px;top:690px;width:5px;height:29px;background:#f5cd4a"></div>
<div class="a" style="left:10px;top:719px;width:1253px;height:1px;background:#efefef"></div>
<div class="a" style="left:20.5px;top:700px;width:11.5px;height:11.5px;border:1px solid #dedede;border-radius:2px;background:#fff"></div>
<svg class="a" style="left:20.5px;top:700px" width="12" height="12" viewBox="0 0 12 12"><path d="M6 3v6M3 6h6" stroke="#a8a8a8" stroke-width="1.5"/></svg>
<div class="a" style="left:41.2px;top:700.5px;width:10.8px;height:10px;background:#fbe9a9;border:1px solid #e8d592;border-radius:2px"></div>
<svg class="a" style="left:38px;top:693px" width="20" height="20" viewBox="0 0 20 20"><path d="M5.8 10.5 L9.2 14 L15.4 4.8" fill="none" stroke="#000" stroke-width="1.5"/></svg>
<div class="a" style="left:60.1px;top:700px;width:11.3px;height:11px;border-radius:3px;background:#ee8f25"></div>
<div class="a" style="left:61.08px;top:702.39px;font-size:7px;line-height:8px;color:#fff;letter-spacing:-0.625px;font-weight:700;">AD</div>
<div class="a" style="left:73.62px;top:699.53px;font-size:10.5px;line-height:13px;color:#222;transform:scaleX(0.9336);transform-origin:0 0;">Переходы по рекламе</div>
<div class="a" style="left:911.60px;top:697.36px;font-size:11px;line-height:13px;color:#222;transform:scaleX(0.9013);transform-origin:0 0;">3 769</div>
<div class="a" style="left:873.6px;top:712.6px;width:61.6px;height:2px;background:#f7eee6"></div>
<div class="a" style="left:873.6px;top:712.6px;width:25.3px;height:2px;background:#e9cca6"></div>
<div class="a" style="left:1007.41px;top:697.36px;font-size:11px;line-height:13px;color:#222;transform:scaleX(0.8994);transform-origin:0 0;">2 998</div>
<div class="a" style="left:953.5px;top:712.6px;width:77.5px;height:2px;background:#f7eee6"></div>
<div class="a" style="left:953.5px;top:712.6px;width:31.8px;height:2px;background:#e9cca6"></div>
<div class="a" style="left:1086.64px;top:697.36px;font-size:11px;line-height:13px;color:#222;transform:scaleX(0.8109);transform-origin:0 0;">31 %</div>
<div class="a" style="left:1049.3px;top:712.6px;width:56.7px;height:2px;background:#f7eee6"></div>
<div class="a" style="left:1049.3px;top:712.6px;width:52.7px;height:2px;background:#e9cca6"></div>
<div class="a" style="left:1165.26px;top:697.36px;font-size:11px;line-height:13px;color:#222;transform:scaleX(0.8942);transform-origin:0 0;">1,53</div>
<div class="a" style="left:1124px;top:712.6px;width:60.0px;height:2px;background:#f7eee6"></div>
<div class="a" style="left:1124px;top:712.6px;width:28.8px;height:2px;background:#e9cca6"></div>
<div class="a" style="left:1235.15px;top:697.36px;font-size:11px;line-height:13px;color:#222;transform:scaleX(0.9091);transform-origin:0 0;">1:13</div>
<div class="a" style="left:1202.3px;top:712.6px;width:51.9px;height:2px;background:#f7eee6"></div>
<div class="a" style="left:1202.3px;top:712.6px;width:11.7px;height:2px;background:#e9cca6"></div>
<div class="a" style="left:5px;top:720px;width:5px;height:29px;background:#e0573a"></div>
<div class="a" style="left:10px;top:749px;width:1253px;height:1px;background:#efefef"></div>
<div class="a" style="left:41.2px;top:730.5px;width:10.8px;height:10px;background:#fbe9a9;border:1px solid #e8d592;border-radius:2px"></div>
<svg class="a" style="left:38px;top:723px" width="20" height="20" viewBox="0 0 20 20"><path d="M5.8 10.5 L9.2 14 L15.4 4.8" fill="none" stroke="#000" stroke-width="1.5"/></svg>
<div class="a" style="left:60.1px;top:730px;width:11.3px;height:11px;border-radius:3px;background:#a3a3a3"></div>
<svg class="a" style="left:60px;top:730px" width="12" height="11" viewBox="0 0 12 11"><path d="M2.8 5.5h5.5M5.8 2.8 L8.6 5.5 L5.8 8.2" fill="none" stroke="#fff" stroke-width="1.4"/></svg>
<div class="a" style="left:73.61px;top:729.53px;font-size:10.5px;line-height:13px;color:#222;transform:scaleX(0.9425);transform-origin:0 0;">Прямые заходы</div>
<div class="a" style="left:911.60px;top:727.36px;font-size:11px;line-height:13px;color:#222;transform:scaleX(0.8994);transform-origin:0 0;">3 668</div>
<div class="a" style="left:873.6px;top:742.6px;width:61.6px;height:2px;background:#f7eee6"></div>
<div class="a" style="left:873.6px;top:742.6px;width:24.6px;height:2px;background:#e9cca6"></div>
<div class="a" style="left:1007.50px;top:727.36px;font-size:11px;line-height:13px;color:#222;transform:scaleX(0.8994);transform-origin:0 0;">3 367</div>
<div class="a" style="left:953.5px;top:742.6px;width:77.5px;height:2px;background:#f7eee6"></div>
<div class="a" style="left:953.5px;top:742.6px;width:35.6px;height:2px;background:#e9cca6"></div>
<div class="a" style="left:1078.23px;top:727.36px;font-size:11px;line-height:13px;color:#222;transform:scaleX(0.8415);transform-origin:0 0;">32,9 %</div>
<div class="a" style="left:1049.3px;top:742.6px;width:56.7px;height:2px;background:#f7eee6"></div>
<div class="a" style="left:1049.3px;top:742.6px;width:56.7px;height:2px;background:#e9cca6"></div>
<div class="a" style="left:1165.26px;top:727.36px;font-size:11px;line-height:13px;color:#222;transform:scaleX(0.8991);transform-origin:0 0;">1,42</div>
<div class="a" style="left:1124px;top:742.6px;width:60.0px;height:2px;background:#f7eee6"></div>
<div class="a" style="left:1124px;top:742.6px;width:27.0px;height:2px;background:#e9cca6"></div>
<div class="a" style="left:1235.51px;top:727.36px;font-size:11px;line-height:13px;color:#222;transform:scaleX(0.8920);transform-origin:0 0;">0:53</div>
<div class="a" style="left:1202.3px;top:742.6px;width:51.9px;height:2px;background:#f7eee6"></div>
<div class="a" style="left:1202.3px;top:742.6px;width:8.3px;height:2px;background:#e9cca6"></div>
<div class="a" style="left:5px;top:750px;width:5px;height:10px;background:#8e3fae"></div>
</body></html>
